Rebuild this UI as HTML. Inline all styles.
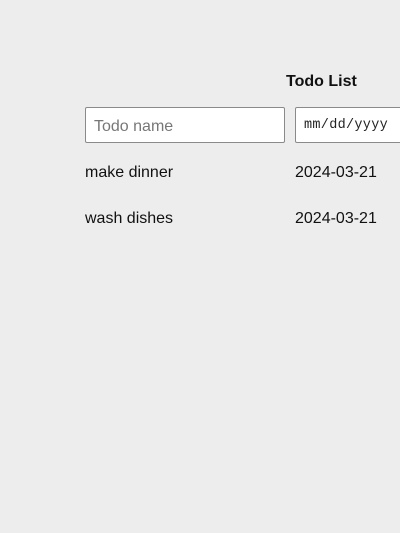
<!DOCTYPE html>
<html><head><style>
html,body{margin:0;padding:0;background:#ededed;width:400px;height:533px;overflow:hidden;font-family:"Liberation Sans",Arial,sans-serif;color:#111;}
.t{position:absolute;left:286px;top:73px;font-weight:bold;font-size:16px;}
.in{position:absolute;top:107px;height:34px;background:#fff;border:1px solid #8a8a8a;border-radius:2px;box-sizing:border-box;}
.row{position:absolute;font-size:16px;}
</style></head><body>
<div class="t">Todo List</div>
<div class="in" style="left:85px;width:200px;height:36px;"><span style="position:absolute;left:8px;top:10px;font-size:16px;color:#777;">Todo name</span></div>
<div class="in" style="left:295px;width:120px;height:36px;"><span style="position:absolute;left:8px;top:10px;font-size:13.5px;letter-spacing:0.3px;font-family:'Liberation Mono',monospace;color:#222;">mm/dd/yyyy</span></div>
<div class="row" style="left:85px;top:164px;">make dinner</div>
<div class="row" style="left:295px;top:164px;">2024-03-21</div>
<div class="row" style="left:85px;top:210px;">wash dishes</div>
<div class="row" style="left:295px;top:210px;">2024-03-21</div>
</body></html>
